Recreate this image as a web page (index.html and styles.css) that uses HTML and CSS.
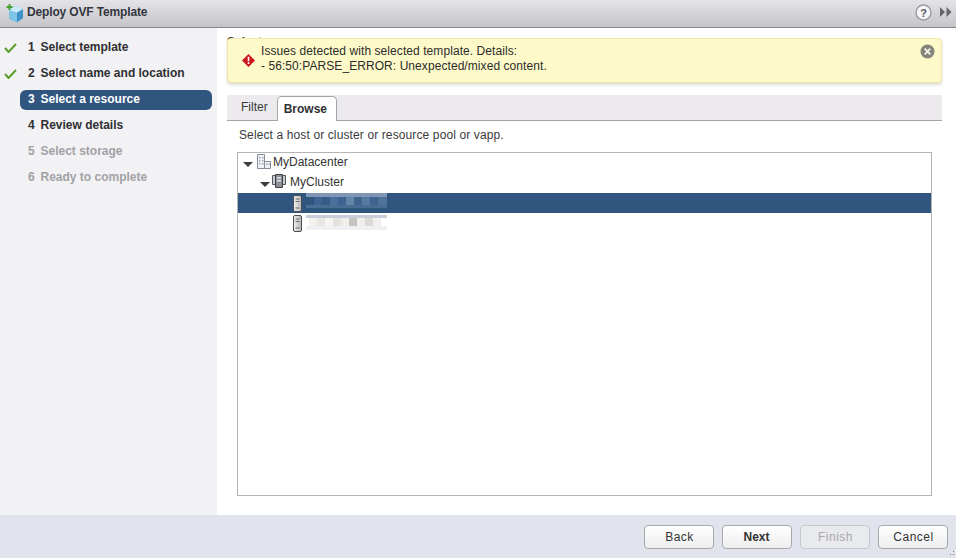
FILE: index.html
```html
<!DOCTYPE html>
<html lang="en">
<head>
<meta charset="utf-8">
<title>Deploy OVF Template</title>
<link rel="stylesheet" href="styles.css">
</head>
<body>
<div class="dialog">
  <header class="titlebar">
    <svg class="logo" width="18" height="20" viewBox="0 0 18 20">
      <path d="M9 3l8 3v9l-6 4.500L3 16V7z" fill="#7cc4e8"/>
      <path d="M11 9.500L17 6v9l-6 4.500z" fill="#3f93c9"/>
      <path d="M3 7l6-4 8 3-6 3.500z" fill="#c9ebf9"/>
      <path d="M2.500 1h2v2h2v2h-2v2h-2V5h-2V3h2z" fill="#49a02e"/>
    </svg>
    <span class="title">Deploy OVF Template</span>
    <span class="spacer"></span>
    <svg class="help" width="17" height="17" viewBox="0 0 17 17">
      <circle cx="8.500" cy="8.500" r="7.500" fill="#f6f6f8" stroke="#9a9a9f" stroke-width="1.400"/>
      <text x="8.500" y="12.500" text-anchor="middle" class="help-mark">?</text>
    </svg>
    <svg class="collapse" width="12" height="10" viewBox="0 0 12 10">
      <path d="M0 0l5 5-5 5zM6.500 0l5 5-5 5z" fill="#66666b"/>
    </svg>
  </header>
  <div class="body">
    <nav class="steps">
      <div class="step done"><svg class="check" width="13" height="10" viewBox="0 0 13 10"><path d="M1 5l3.500 4L12 1" fill="none" stroke="#5a9e2c" stroke-width="2"/></svg><b>1</b><span>Select template</span></div>
      <div class="step done"><svg class="check" width="13" height="10" viewBox="0 0 13 10"><path d="M1 5l3.500 4L12 1" fill="none" stroke="#5a9e2c" stroke-width="2"/></svg><b>2</b><span>Select name and location</span></div>
      <div class="step current"><b>3</b><span>Select a resource</span></div>
      <div class="step"><b>4</b><span>Review details</span></div>
      <div class="step off"><b>5</b><span>Select storage</span></div>
      <div class="step off"><b>6</b><span>Ready to complete</span></div>
    </nav>
    <main class="content">
      <div class="page-title">Select a resource</div>
      <div class="banner">
        <svg class="err" width="13" height="13" viewBox="0 0 13 13">
          <path d="M6.500 0L13 6.500 6.500 13 0 6.500z" fill="#c8171d"/>
          <path d="M5.700 2.800h1.600v4.400H5.700zM5.700 8.300h1.600v1.600H5.700z" fill="#fff"/>
        </svg>
        <div class="banner-text">Issues detected with selected template. Details:<br>- 56:50:PARSE_ERROR: Unexpected/mixed content.</div>
        <svg class="close" width="15" height="15" viewBox="0 0 15 15">
          <circle cx="7.500" cy="7.500" r="7" fill="#85857c"/>
          <path d="M4.700 4.700l5.600 5.600M10.300 4.700l-5.600 5.600" stroke="#f4f4ec" stroke-width="1.800"/>
        </svg>
      </div>
      <div class="tabs">
        <span class="tab">Filter</span>
        <span class="tab active">Browse</span>
      </div>
      <p class="hint">Select a host or cluster or resource pool or vapp.</p>
      <div class="tree">
        <div class="row depth0">
          <i class="arrow"></i>
          <svg width="16" height="16" viewBox="0 0 16 16"><path d="M1.500 .5h7v14h-7zM8.500 7.500h6v7h-6z" fill="#eef1f6" stroke="#858d98"/><path d="M3 3h1.500v1.500H3zM6 3h1.500v1.500H6zM3 6h1.500v1.500H3zM6 6h1.500v1.500H6zM3 9h1.500v1.500H3zM6 9h1.500v1.500H6zM10 9.500h1.500V11H10zM12.500 9.500H14V11h-1.500z" fill="#a2abb5"/></svg>
          <span>MyDatacenter</span>
        </div>
        <div class="row depth1">
          <i class="arrow"></i>
          <svg width="14" height="15" viewBox="0 0 14 15"><path d="M.5 1.500h3v9h-3zM10.500 1.500h3v9h-3z" fill="#c9ccd0" stroke="#55595e"/><path d="M3.500.5h7v13h-7z" fill="#8b9096" stroke="#3f4347"/><path d="M5 3h4v1.500H5zM5 6h4v1.500H5z" fill="#e8eaec"/></svg>
          <span>MyCluster</span>
        </div>
        <div class="row depth2 selected">
          <svg class="host" width="9" height="17" viewBox="0 0 9 17"><defs><linearGradient id="hostfill" x1="0" x2="1" y1="0" y2="0"><stop offset="0" stop-color="#f2f2f0"/><stop offset="1" stop-color="#b5b7b6"/></linearGradient></defs><rect x=".5" y=".5" width="8" height="16" rx="1.500" fill="url(#hostfill)" stroke="#4a4d50"/><path d="M2.500 3.500h4v1h-4zM2.500 6h4v1h-4zM2.500 12.500h4v1h-4z" fill="#6a6e72"/></svg>
          <span class="mosaic sel"></span>
        </div>
        <div class="row depth2">
          <svg class="host" width="9" height="17" viewBox="0 0 9 17"><rect x=".5" y=".5" width="8" height="16" rx="1.500" fill="url(#hostfill)" stroke="#4a4d50"/><path d="M2.500 3.500h4v1h-4zM2.500 6h4v1h-4zM2.500 12.500h4v1h-4z" fill="#6a6e72"/></svg>
          <span class="mosaic plain"></span>
        </div>
      </div>
    </main>
  </div>
  <footer class="footer">
    <button class="btn" type="button">Back</button>
    <button class="btn primary" type="button">Next</button>
    <button class="btn disabled" type="button" disabled>Finish</button>
    <button class="btn" type="button">Cancel</button>
    <i class="grip"></i>
  </footer>
</div>
</body>
</html>
```

FILE: styles.css
```css
* { box-sizing: border-box; }
html, body { margin: 0; height: 100%; }
body { font-family: "Liberation Sans", Arial, sans-serif; font-size: 12px; color: #333; background: #fff; overflow: hidden; }
.dialog { width: 956px; height: 558px; display: flex; flex-direction: column; }

.titlebar { height: 28px; flex: none; display: flex; align-items: center; padding: 0 4px 3px 6px; background: linear-gradient(#e4e4e8, #c4c4c9); border-bottom: 1px solid #85858a; }
.logo { margin-right: 3px; margin-top: 2px; }
.title { font-weight: bold; color: #33373d; letter-spacing: -.15px; }
.spacer { flex: 1; }
.help { margin-right: 8px; }
.help-mark { font: bold 11px "Liberation Sans", sans-serif; fill: #55555a; }

.body { flex: 1; display: flex; min-height: 0; }
.steps { width: 217px; flex: none; padding: 6px 5px 0 0; background: #f2f1f4; }
.step { height: 26px; display: flex; align-items: center; padding-left: 28px; position: relative; font-weight: bold; color: #2f3033; }
.step b { width: 12.500px; }
.step .check { position: absolute; left: 4px; top: 9px; }
.step.current { height: 20px; margin: 4px 0 2px 20px; padding: 0 0 2px 8px; background: #30557f; color: #fff; border-radius: 6px; }
.step.off { color: #a2a2a6; }

.content { flex: 1; position: relative; padding: 7px 14px 0 10px; display: flex; flex-direction: column; min-width: 0; }
.page-title { font-weight: bold; height: 12px; line-height: 14px; color: #333; margin-bottom: 48px; }
.banner { position: absolute; left: 10px; top: 10px; width: 715px; height: 45px; display: flex; align-items: center; padding: 0 6px 0 14px; background: #fdf9c9; border: 1px solid #eee6ac; border-radius: 4px; box-shadow: 0 2px 3px rgba(120,120,100,.25); color: #2d2d2b; letter-spacing: .07px; }
.err { margin-right: 6px; flex: none; }
.banner-text { flex: 1; line-height: 15px; padding-bottom: 4px; }
.close { align-self: flex-start; margin-top: 5px; }

.tabs { height: 26px; display: flex; align-items: flex-end; padding-left: 4px; background: #eceaed; border-bottom: 1px solid #a5a5a8; }
.tab { padding: 0 9px 0 10px; height: 24px; line-height: 23px; color: #3a3a3c; }
.tab.active { padding: 0 9px 0 6px; height: 25px; margin-bottom: -1px; line-height: 24px; font-weight: bold; color: #2f3033; background: #fff; border: 1px solid #a5a5a8; border-bottom: 0; border-radius: 5px 5px 0 0; }
.hint { margin: 7px 0 10px 12px; line-height: 14px; color: #3a3a3c; letter-spacing: .12px; }

.tree { height: 344px; border: 1px solid #b4b4b4; margin: 0 10px; }
.row { height: 20px; display: flex; align-items: center; color: #333; }
.arrow { width: 0; height: 0; border: 5px solid transparent; border-top: 5px solid #3e3e40; border-bottom: 0; margin-top: 5px; }
.depth0 { padding: 0 0 3px 5px; }
.depth0 .arrow { margin-right: 3px; }
.depth0 svg { margin-right: 1px; }
.depth1 { padding: 0 0 3px 22px; }
.depth1 .arrow { margin-right: 2px; }
.depth1 svg { margin-right: 4px; }
.depth2 { padding-left: 55px; }
.host { margin-right: 4px; flex: none; }
.selected { background: #30557f; }
.mosaic { width: 81px; height: 15px; display: block; align-self: flex-start; }
.mosaic.sel { background:
  linear-gradient(#7f97b4 0 4px, transparent 4px),
  linear-gradient(transparent 12px, #4a6d94 12px),
  linear-gradient(90deg, #30557f 0 8px, #3d6390 8px 16px, #365b87 16px 24px, #4a6f99 24px 32px, #3d6390 32px 40px, #6585a8 40px 48px, #3f648f 48px 56px, #567aa0 56px 64px, #3f648f 64px 72px, #4f7299 72px); }
.mosaic.plain { margin-top: 2px; background:
  linear-gradient(#c8cfda 0 3px, transparent 3px),
  linear-gradient(transparent 11px, #eef0f3 11px),
  linear-gradient(90deg, #fff 0 3px, #f3f1ee 3px 11px, #e8e6e2 11px 19px, #f6f4f2 19px 27px, #e4e2de 27px 35px, #f0eeea 35px 43px, #c6c4c0 43px 51px, #f1efed 51px 59px, #dcdad6 59px 67px, #f2f0ee 67px 75px, #fff 75px); }

.footer { height: 43px; flex: none; position: relative; display: flex; justify-content: flex-end; align-items: flex-start; gap: 8px; padding: 10px 8px 0 0; background: #e1e4ed; }
.btn { width: 70px; height: 24px; padding: 0 0 0 1px; font: 12px "Liberation Sans", Arial, sans-serif; letter-spacing: .5px; color: #333; background: linear-gradient(#fff, #eeeef0); border: 1px solid #a9a9ad; border-radius: 4px; }
.btn.primary { font-weight: bold; letter-spacing: 0; padding: 0 1px 0 0; }
.btn.disabled { color: #a8a8ac; border-color: #c8c9ce; background: #e9eaee; }
.grip { position: absolute; right: 0; bottom: 1px; width: 10px; height: 10px; background: radial-gradient(circle, #777 0 .7px, transparent .8px) 0 0 / 3px 3px; clip-path: polygon(100% 0, 100% 100%, 0 100%); }
```
